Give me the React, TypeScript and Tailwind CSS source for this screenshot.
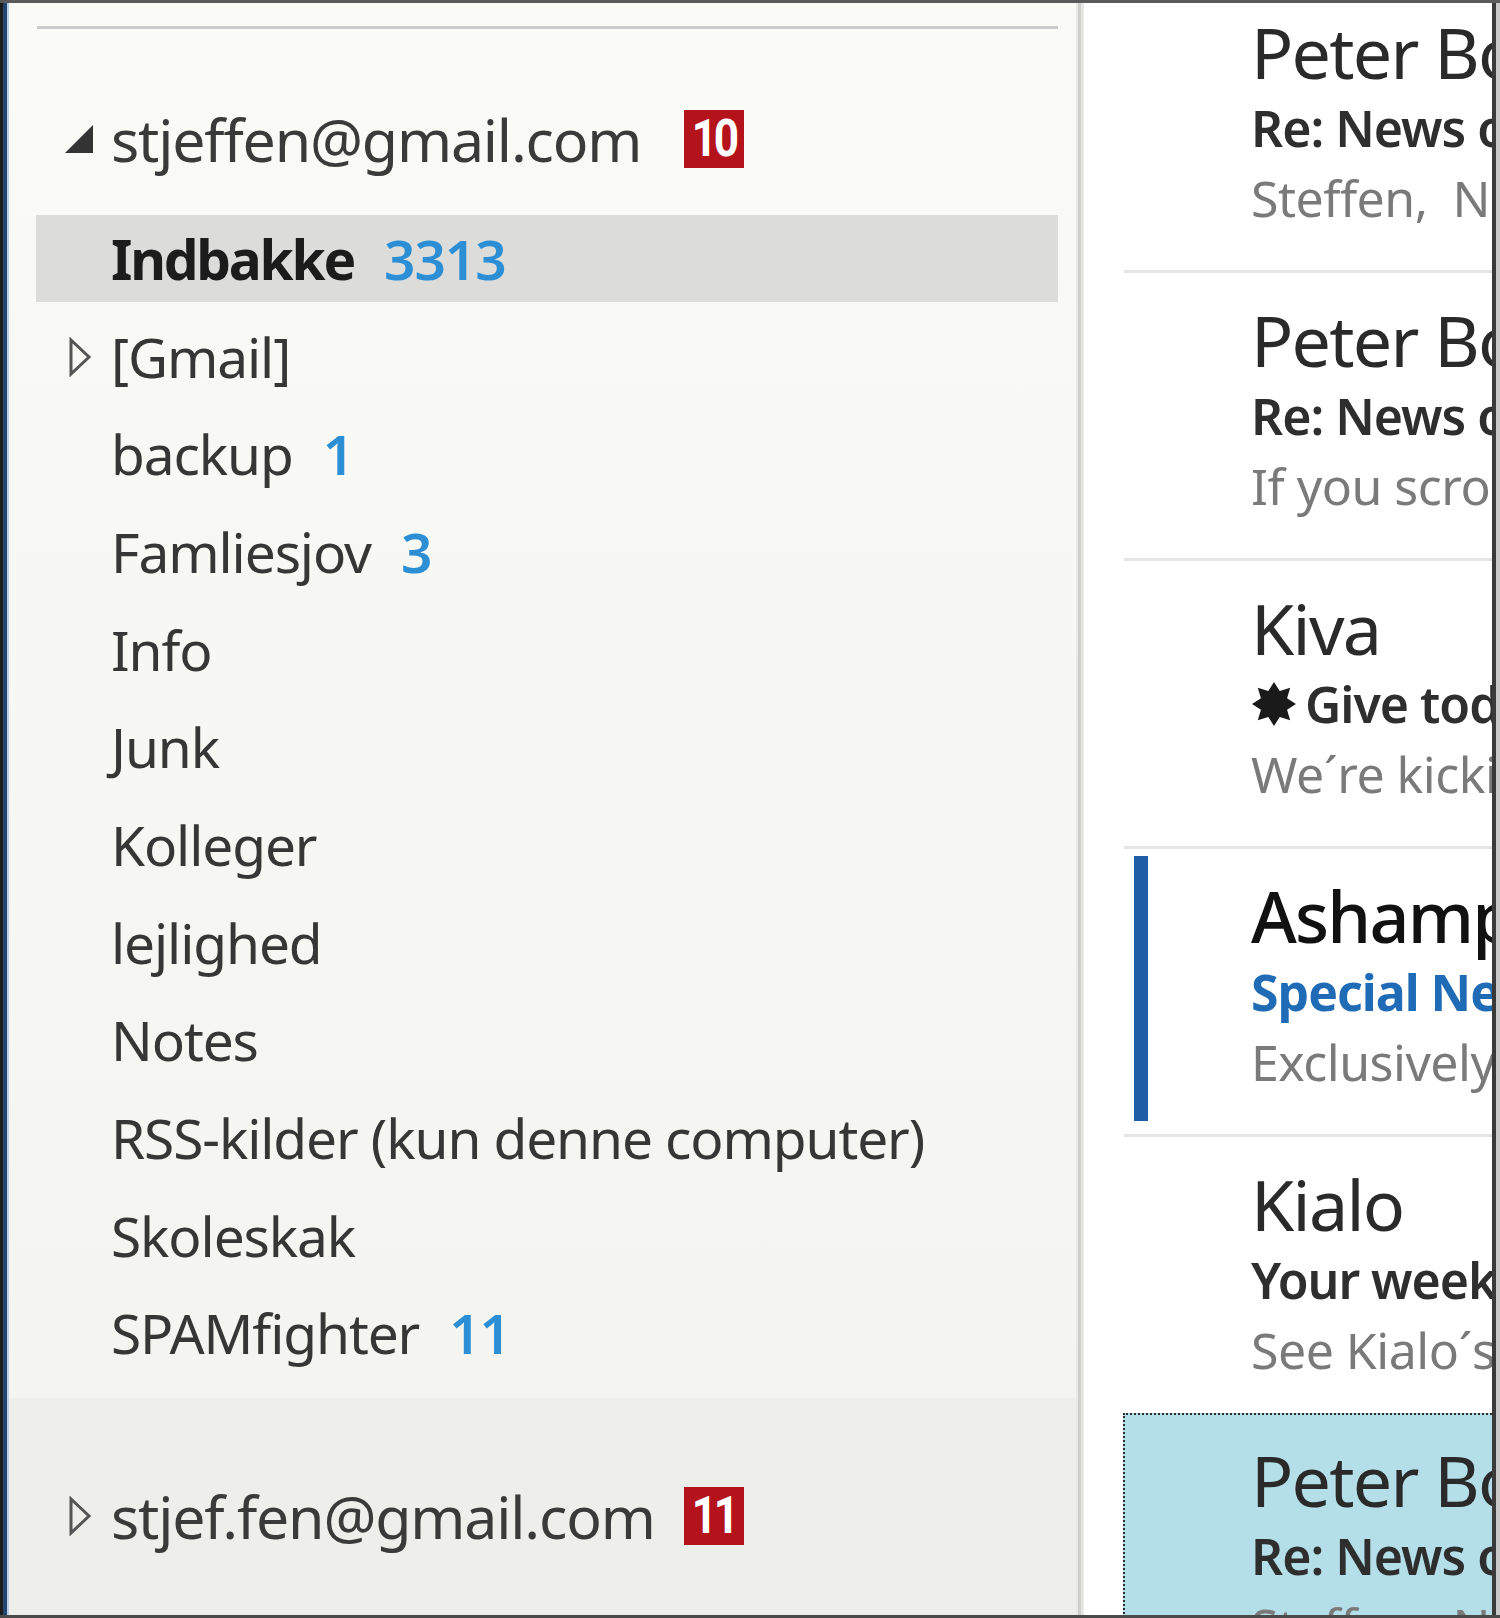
import React from "react";
import clsx from "clsx";

type Folder = {
  name: string;
  count?: string;
  selected?: boolean;
  expandable?: boolean;
};

const folders: Folder[] = [
  { name: "Indbakke", count: "3313", selected: true },
  { name: "[Gmail]", expandable: true },
  { name: "backup", count: "1" },
  { name: "Famliesjov", count: "3" },
  { name: "Info" },
  { name: "Junk" },
  { name: "Kolleger" },
  { name: "lejlighed" },
  { name: "Notes" },
  { name: "RSS-kilder (kun denne computer)" },
  { name: "Skoleskak" },
  { name: "SPAMfighter", count: "11" },
];

type Mail = {
  from: string;
  subject: string;
  preview: string;
  star?: boolean;
  unread?: boolean;
  selected?: boolean;
};

const mails: Mail[] = [
  { from: "Peter Bodin", subject: "Re: News on the project", preview: "Steffen,\u00a0\u00a0Nice work" },
  { from: "Peter Bodin", subject: "Re: News on the project", preview: "If you scroll down" },
  { from: "Kiva", subject: "Give today", preview: "We´re kicking off", star: true },
  { from: "Ashampoo", subject: "Special Newsletter", preview: "Exclusively for you", unread: true },
  { from: "Kialo", subject: "Your weekly digest", preview: "See Kialo´s top" },
  { from: "Peter Bodin", subject: "Re: News on the project", preview: "Steffen,\u00a0\u00a0Nice work", selected: true },
];

function Collapsed() {
  return (
    <svg width="24" height="40" viewBox="0 0 24 40">
      <polygon points="3,3 21,20 3,37" fill="none" stroke="#555" strokeWidth="3" />
    </svg>
  );
}

function Expanded() {
  return (
    <svg width="30" height="30" viewBox="0 0 30 30">
      <polygon points="29,1 29,29 1,29" fill="#333" />
    </svg>
  );
}

function Badge({ n }: { n: string }) {
  return (
    <div className="flex h-[58px] w-[60px] shrink-0 items-center justify-center bg-[#b5131c]">
      <span className="inline-block scale-x-[0.85] font-['Roboto',sans-serif] text-[52px] font-bold leading-none tracking-[-0.08em] text-white">
        {n}
      </span>
    </div>
  );
}

function Account({ email, badge, open }: { email: string; badge: string; open?: boolean }) {
  return (
    <div className="flex h-[70px] items-center">
      <div className={clsx("flex w-[102px] shrink-0 items-center", open ? "pl-[55px]" : "pl-[59px]")}>
        {open ? <Expanded /> : <Collapsed />}
      </div>
      <span className="w-[573px] shrink-0 whitespace-nowrap text-[59px] leading-[70px] tracking-[-0.02em] text-[#3a3a3a]">
        {email}
      </span>
      <Badge n={badge} />
    </div>
  );
}

function FolderRow({ f }: { f: Folder }) {
  return (
    <div className="flex h-[97.7px] shrink-0 items-center">
      <div
        className={clsx(
          "ml-[27px] mr-[18px] flex h-[87px] flex-1 items-center",
          f.selected && "bg-[#dcdcda]"
        )}
      >
        <div className="flex w-[75px] shrink-0 items-center pl-[32px]">{f.expandable && <Collapsed />}</div>
        <span
          className={clsx(
            "whitespace-nowrap text-[55px] leading-[70px]",
            f.selected ? "font-bold tracking-[-0.04em] text-[#1c1c1c]" : "tracking-[-0.02em] text-[#363636]"
          )}
        >
          {f.name}
        </span>
        {f.count && (
          <span className="ml-[30px] text-[55px] font-semibold leading-[70px] tracking-[-0.02em] text-[#2c8fd6]">
            {f.count}
          </span>
        )}
      </div>
    </div>
  );
}

function Star() {
  return (
    <svg width="46" height="46" viewBox="0 0 44 44" className="mr-[8px] shrink-0">
      <polygon
        points="22,1 27.5,9.5 37.5,6.5 34.5,16.5 43,22 34.5,27.5 37.5,37.5 27.5,34.5 22,43 16.5,34.5 6.5,37.5 9.5,27.5 1,22 9.5,16.5 6.5,6.5 16.5,9.5"
        fill="#1a1a1a"
      />
    </svg>
  );
}

function Message({ m, first }: { m: Mail; first?: boolean }) {
  return (
    <div
      className={clsx(
        "flex h-[288px] shrink-0",
        m.selected
          ? "-mt-[9px] ml-[39px] border-l-2 border-t-2 border-dotted border-[#2b2b2b] bg-[#b4dfe8]"
          : "ml-[40px] border-t-[3px] border-[#e4e4e4]",
        first && "-mt-[21px]"
      )}
    >
      <div className={clsx("shrink-0 pb-[13px] pl-[10px] pt-[7px]", m.selected ? "w-[126px]" : "w-[127px]")}>
        {m.unread && <div className="h-full w-[14px] bg-[#1f5da6]" />}
      </div>
      <div className={clsx("min-w-0 flex-1 overflow-hidden whitespace-nowrap", m.selected ? "pt-[25px]" : "pt-[27px]")}>
        <div
          className={clsx(
            "h-[80px] text-[70px] leading-[80px] tracking-[-0.025em]",
            m.unread ? "font-medium text-[#111111]" : "font-normal text-[#2a2a2a]"
          )}
        >
          {m.from}
        </div>
        <div
          className={clsx(
            "flex h-[72px] items-center text-[50px] leading-[72px] tracking-[-0.02em]",
            m.unread ? "font-bold text-[#1f6bb6]" : "font-semibold text-[#2e2e2e]"
          )}
        >
          {m.star && <Star />}
          {m.subject}
        </div>
        <div className="h-[68px] text-[50px] leading-[68px] tracking-[-0.01em] text-[#7a7a7a]">{m.preview}</div>
      </div>
    </div>
  );
}

export default function App() {
  return (
    <div className="flex h-[1618px] w-[1500px] flex-col overflow-hidden bg-white font-['Noto_Sans','Open_Sans',sans-serif]">
      <div className="h-[3px] shrink-0 bg-[#5a5a5a]" />
      <div className="flex min-h-0 flex-1">
        <div className="w-[3px] shrink-0 bg-[#1d1d1d]" />
        <div className="w-[4px] shrink-0 bg-[#24466e]" />
        <div className="w-[2px] shrink-0 bg-[#b8d0ea]" />

        {/* folder pane */}
        <div className="flex w-[1067px] shrink-0 flex-col overflow-hidden bg-linear-to-b from-[#fafaf7] to-[#f3f3f0]">
          <div className="mt-[23px] ml-[28px] mr-[18px] h-[3px] shrink-0 bg-[#cacaca]" />
          <div className="shrink-0 pb-[36px] pt-[75px]">
            <Account email="stjeffen@gmail.com" badge="10" open />
          </div>
          {folders.map((f) => (
            <FolderRow key={f.name} f={f} />
          ))}
          <div className="mt-auto h-[217px] shrink-0 bg-[#eeeeeb] pt-[83px]">
            <Account email="stjef.fen@gmail.com" badge="11" />
          </div>
        </div>

        <div className="flex w-[8px] shrink-0">
          <div className="w-[2px] bg-[#e8e8e6]" />
          <div className="w-[3px] bg-[#cfcfcd]" />
          <div className="w-[3px] bg-[#e6e6e4]" />
        </div>

        {/* message list */}
        <div className="flex w-[408px] shrink-0 flex-col overflow-hidden bg-white">
          {mails.map((m, i) => (
            <Message key={i} m={m} first={i === 0} />
          ))}
        </div>

        <div className="w-[4px] shrink-0 bg-[#3a3a3a]" />
        <div className="w-[4px] shrink-0 bg-[#c9c9c9]" />
      </div>
      <div className="h-[3px] shrink-0 bg-[#4a4a4a]" />
    </div>
  );
}
